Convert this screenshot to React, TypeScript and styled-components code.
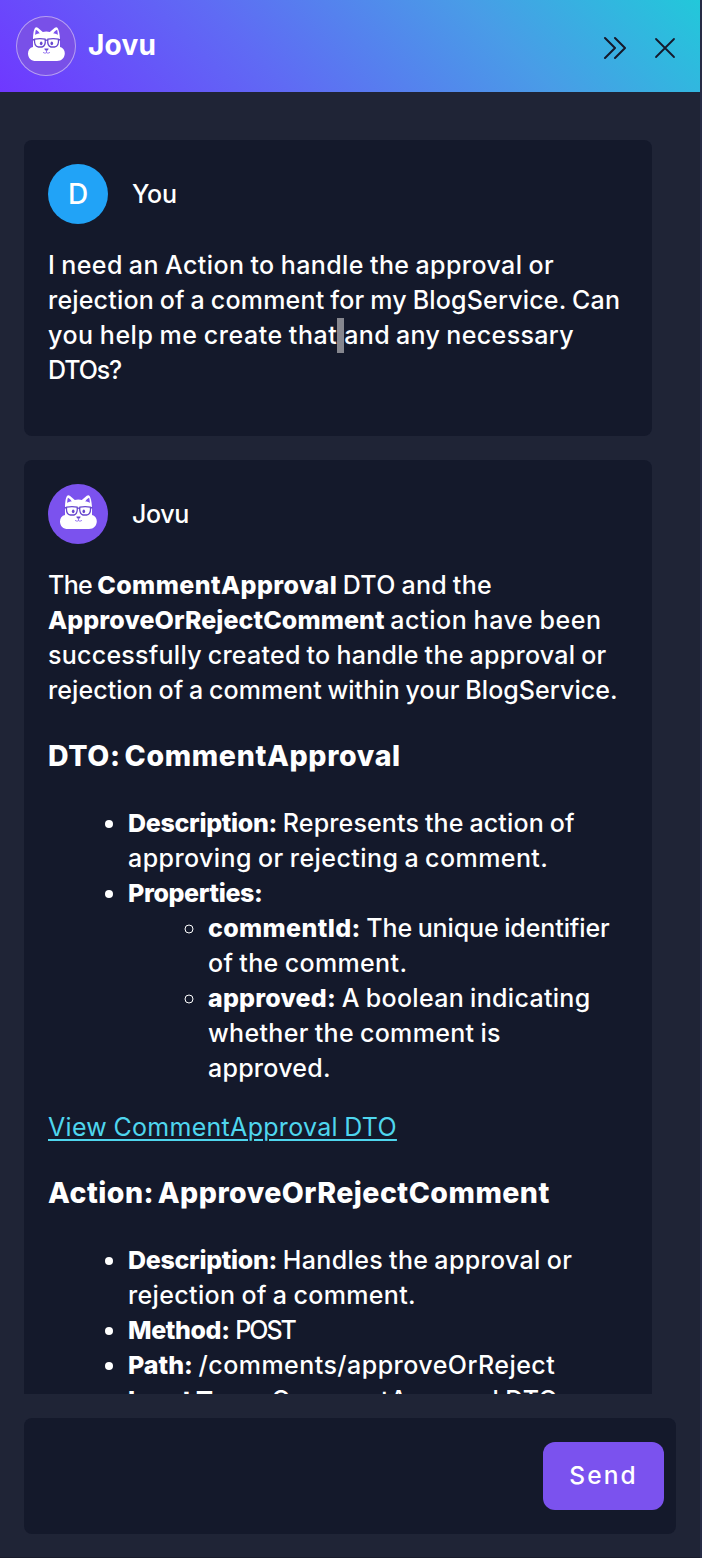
import React from 'react';
import styled, { createGlobalStyle } from 'styled-components';

const GlobalStyle = createGlobalStyle`
  * { box-sizing: border-box; }
  body {
    margin: 0;
    background: #262b45;
    color: #fff;
    font-family: Inter, 'Liberation Sans', sans-serif;
    font-size: 25px;
    font-weight: 450;
    line-height: 35px;
    word-spacing: -1px;
    overflow: hidden;
  }
`;

const Panel = styled.main`
  display: flex;
  flex-direction: column;
  width: 700px;
  height: 1558px;
  background: #1f2436;
  border-bottom: 1px solid #191c2c;
`;

const Header = styled.header`
  display: flex;
  flex: none;
  align-items: center;
  height: 92px;
  padding: 0 24px 0 16px;
  background: linear-gradient(45deg, #6f38ff, #5f6bf4 37%, #499ce7 70%, #22c8da);
`;

const Title = styled.h1`
  flex: 1;
  margin: 0 0 1px 12px;
  font-size: 28px;
  font-weight: 750;
  letter-spacing: 0.2px;
`;

const IconButton = styled.button`
  display: flex;
  width: 24px;
  height: 24px;
  margin: 4px 0 0 26px;
  padding: 0;
  border: 0;
  background: none;
  color: #15192b;
`;

const Avatar = styled.div<{ $color: string; $ring?: boolean }>`
  display: flex;
  flex: none;
  align-items: center;
  justify-content: center;
  width: 60px;
  height: 60px;
  border-radius: 50%;
  background: ${(p) => p.$color};
  box-shadow: ${(p) => (p.$ring ? 'inset 0 0 0 1px rgba(255, 255, 255, 0.45)' : 'none')};
  font-size: 28px;
`;

const Messages = styled.section`
  display: flex;
  flex-direction: column;
  gap: 24px;
  height: 1302px;
  flex: none;
  padding: 48px 48px 0 24px;
  overflow: hidden;
`;

const Message = styled.article`
  flex: none;
  padding: 24px 24px 48px;
  border-radius: 8px;
  background: #14192b;
`;

const Author = styled.div`
  display: flex;
  align-items: center;
  gap: 24px;
  margin-bottom: 24px;
`;

const Text = styled.p`
  margin: 0;
  white-space: nowrap;
`;

const Run = styled.span<{ $track?: number }>`
  letter-spacing: ${(p) => p.$track ?? 0}px;
`;

const Strong = styled.strong<{ $track?: number }>`
  font-weight: 800;
  letter-spacing: ${(p) => p.$track ?? 0}px;
`;

const Highlight = styled.span`
  display: inline-block;
  width: 7px;
  height: 35px;
  background: #85868e;
  vertical-align: top;
`;

const Heading = styled.h3<{ $track: number }>`
  margin: 27px 0 29px;
  font-size: 28.5px;
  font-weight: 800;
  line-height: 42px;
  letter-spacing: ${(p) => p.$track}px;
  word-spacing: -3px;
  white-space: nowrap;
`;

const List = styled.ul`
  margin: 0;
  padding-left: 80px;
  white-space: nowrap;
`;

const Link = styled.a`
  display: inline-block;
  margin-top: 24px;
  color: #4fd6ee;
  font-weight: 400;
  letter-spacing: 0.3px;
  text-decoration: underline;
  text-decoration-thickness: 2px;
  text-underline-offset: 3px;
  vertical-align: top;
`;

const Composer = styled.form`
  display: flex;
  flex: none;
  align-items: center;
  height: 116px;
  margin: 24px 24px 0;
  padding: 0 12px 0 24px;
  border-radius: 8px;
  background: #14192b;
`;

const Input = styled.input`
  flex: 1;
  min-width: 0;
  border: 0;
  outline: 0;
  background: transparent;
  color: inherit;
  font: inherit;
`;

const SendButton = styled.button`
  width: 121px;
  height: 68px;
  padding: 0 0 2px;
  border: 0;
  border-radius: 12px;
  background: #7b52ee;
  color: #fff;
  font: 500 24.5px/35px Inter, sans-serif;
  letter-spacing: 2.100px;
`;

function Cat() {
  return (
    <svg width="60" height="60" viewBox="0 0 60 60" fill="none">
      <path
        fill="#fff"
        d="M17 31V24C17 20 17.500 14 19 12c.7-1 1.800-.9 2.800-.2l5 4.200c2-.7 5-.7 7 0l5-4.200c1-.7 2.100-.8 2.800.2C43 14 44 20 44 24v7c3 .6 4.800 3 4.800 6.300 0 4.500-3.200 7.700-7.800 7.700H20c-4.800 0-8-3.100-8-7.600 0-3.200 1.800-5.700 5-6.400Z"
      />
      <path fill="#7b52ee" d="M19.200 19c0-2 .2-3.800.8-5.200 1.500.8 2.800 2.200 3.700 3.700-1.800-.1-3.300.4-4.500 1.500ZM41.800 19c0-2-.2-3.800-.8-5.200-1.500.8-2.800 2.200-3.700 3.700 1.800-.1 3.300.4 4.500 1.500Z" />
      <g stroke="#6747cf" strokeWidth="1.300">
        <path d="M18.600 23.200c3.500-.8 7.300-.8 10.600 0 .4 4-.2 7-3.200 7.800h-3.600c-3.200-.5-4.300-3.600-3.800-7.800ZM31.800 23.200c3.500-.8 7.300-.8 10.600 0 .5 4.200-.6 7.300-3.800 7.800H35c-3-.8-3.600-3.800-3.200-7.800Z" />
        <path d="M29 24.500c1-.6 2-.6 3 0M16.500 23.500l2 .5M44.500 23.500l-2 .5" />
      </g>
      <g fill="#6747cf">
        <ellipse cx="25.200" cy="27.300" rx="1.300" ry="1.900" />
        <ellipse cx="35.800" cy="27.300" rx="1.300" ry="1.900" />
        <path d="M28.400 32.600h4.200c-.2 1.500-1 2.200-2.100 2.200s-1.900-.7-2.100-2.200Z" />
      </g>
      <path d="M30.500 34.500v2M27 36.200c1 1 2.500 1.200 3.500.4 1 .8 2.500.6 3.500-.4" stroke="#7b52ee" strokeWidth=".8" />
    </svg>
  );
}

export default function App() {
  return (
    <>
      <GlobalStyle />
      <Panel>
        <Header>
          <Avatar $color="#7950e8" $ring>
            <Cat />
          </Avatar>
          <Title>Jovu</Title>
          <IconButton aria-label="Collapse">
            <svg width="24" height="24" viewBox="0 0 24 24" fill="none" stroke="currentColor" strokeWidth="2" strokeLinecap="round" strokeLinejoin="round">
              <path d="M3 2l10 10L3 22M13 2l10 10-10 10" />
            </svg>
          </IconButton>
          <IconButton aria-label="Close">
            <svg width="24" height="24" viewBox="0 0 24 24" fill="none" stroke="currentColor" strokeWidth="1.800" strokeLinecap="round">
              <path d="M4 3l18 18M22 3L4 21" />
            </svg>
          </IconButton>
        </Header>

        <Messages>
          <Message>
            <Author>
              <Avatar $color="#21a3f7">D</Avatar>
              <Run $track={-0.2}>You</Run>
            </Author>
            <Text>
              <Run $track={0.41}>I need an Action to handle the approval or</Run>
              <br />
              <Run $track={0.19}>rejection of a comment for my BlogService. Can</Run>
              <br />
              <Run $track={0.53}>you help me create that</Run>
              <Highlight> </Highlight>
              <Run $track={0.36}>and any necessary</Run>
              <br />
              <Run $track={-1.1}>DTOs?</Run>
            </Text>
          </Message>

          <Message>
            <Author>
              <Avatar $color="#7b52ee">
                <Cat />
              </Avatar>
              <Run $track={-0.4}>Jovu</Run>
            </Author>
            <Text>
              <Run $track={-0.65}>The </Run>
              <Strong $track={0.42}>CommentApproval</Strong> <Run $track={0.25}>DTO and the</Run>
              <br />
              <Strong $track={0.08}>ApproveOrRejectComment</Strong> <Run $track={0.57}>action have been</Run>
              <br />
              <Run $track={0.26}>successfully created to handle the approval or</Run>
              <br />
              <Run $track={0.07}>rejection of a comment within your BlogService.</Run>
            </Text>
            <Heading $track={0.65}>DTO: CommentApproval</Heading>
            <List>
              <li>
                <Strong $track={-0.3}>Description:</Strong> <Run $track={0.15}>Represents the action of</Run>
                <br />
                <Run $track={0.43}>approving or rejecting a comment.</Run>
              </li>
              <li>
                <Strong $track={-0.35}>Properties:</Strong>
                <List>
                  <li>
                    <Strong $track={0.35}>commentId:</Strong> <Run $track={-0.1}>The unique identifier</Run>
                    <br />
                    <Run $track={0.36}>of the comment.</Run>
                  </li>
                  <li>
                    <Strong $track={0.2}>approved:</Strong> <Run $track={0.32}>A boolean indicating</Run>
                    <br />
                    <Run $track={0.33}>whether the comment is</Run>
                    <br />
                    <Run $track={0.25}>approved.</Run>
                  </li>
                </List>
              </li>
            </List>
            <Link>View CommentApproval DTO</Link>
            <Heading $track={0.47}>Action: ApproveOrRejectComment</Heading>
            <List>
              <li>
                <Strong $track={-0.3}>Description:</Strong> <Run $track={0.35}>Handles the approval or</Run>
                <br />
                <Run $track={0.36}>rejection of a comment.</Run>
              </li>
              <li>
                <Strong $track={-0.4}>Method:</Strong> <Run $track={-2}>POST</Run>
              </li>
              <li>
                <Strong>Path:</Strong> <Run $track={0.46}>/comments/approveOrReject</Run>
              </li>
              <li>
                <Strong $track={-0.15}>Input Type:</Strong> <Run $track={0.3}>CommentApproval DTO</Run>
              </li>
            </List>
          </Message>
        </Messages>

        <Composer>
          <Input aria-label="Message" />
          <SendButton type="button">Send</SendButton>
        </Composer>
      </Panel>
    </>
  );
}
